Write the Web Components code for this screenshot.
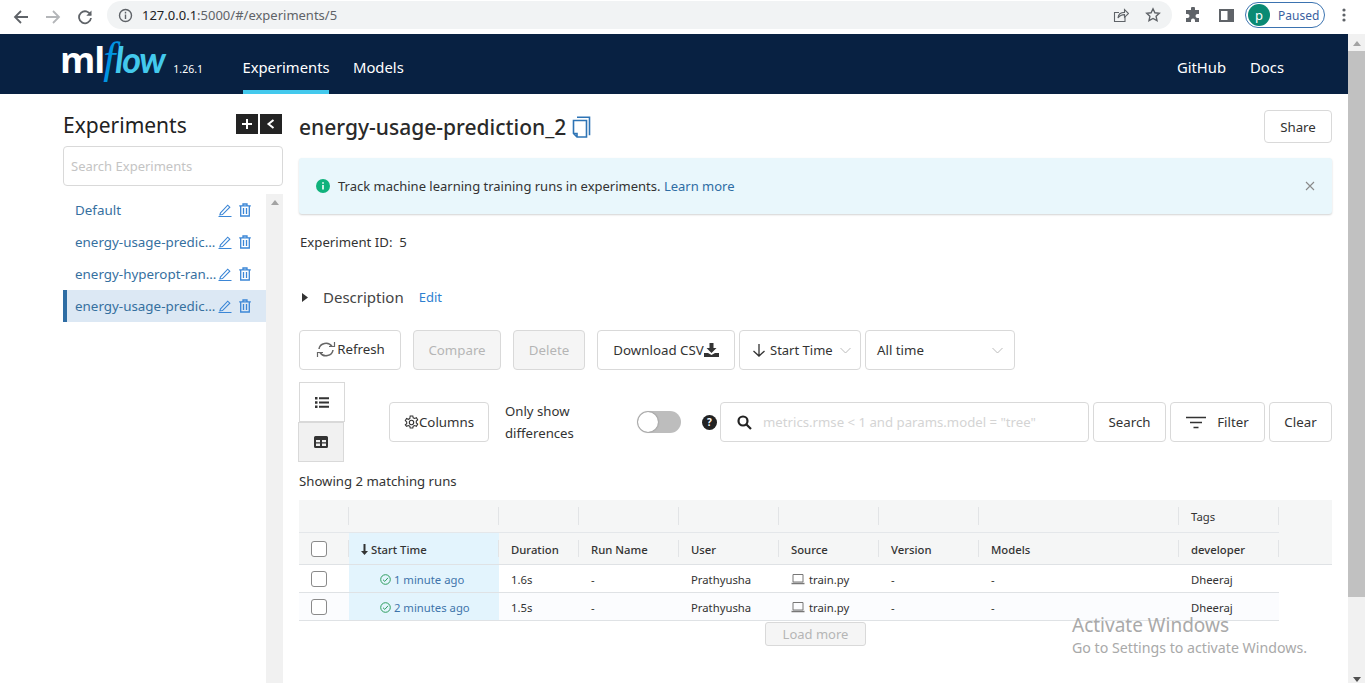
<!DOCTYPE html>
<html lang="en">
<head>
<meta charset="UTF-8">
<title>MLflow Experiments</title>
<style>
  html, body { margin: 0; height: 683px; overflow: hidden; background: #fff; }
  body { font-family: "Noto Sans", "Open Sans", sans-serif; color: #333; }
</style>
</head>
<body>
<browser-bar></browser-bar>
<page-frame>
  <app-header></app-header>
  <div style="display:flex; padding-left:63px">
    <exp-sidebar></exp-sidebar>
    <exp-main></exp-main>
  </div>
</page-frame>
<activate-note></activate-note>

<script>
// small helper, every component just sets its shadow html
class Base extends HTMLElement {
    constructor() {
        super();
        this.attachShadow({ mode: 'open' }).innerHTML = this.render();
    }
}

class BrowserBar extends Base {
    render() {
        return `
        <style>
            :host { display:flex; align-items:center; height:34px; background:#fff; color:#5f6368; font-size:13px; position:relative; }
            svg { display:block; flex:none; }
            .nav { display:flex; align-items:center; padding-left:13px; width:107px; box-sizing:border-box; height:30px; }
            .nav svg { margin-right:16px; }
            .pill { width:1065px; height:28px; margin-top:-4px; border-radius:14px; background:#f1f3f4; display:flex; align-items:center; box-sizing:border-box; padding:0 11px; flex:none; }
            .url { margin-left:9px; flex:1; white-space:nowrap; }
            .url b { font-weight:400; color:#202124; }
            .right { display:flex; align-items:center; margin-top:-4px; }
            .paused { display:flex; align-items:center; width:80px; height:26px; box-sizing:border-box; border:1px solid #3b73b0; border-radius:14px; padding-left:2px; color:#3a5fa0; font-size:12px; margin-left:11px; gap:8px; }
            .avatar { width:22px; height:22px; border-radius:50%; background:#0b8a74; color:#fff; font-size:13px; display:flex; align-items:center; justify-content:center; }
        </style>
        <div class="nav">
            <svg width="16" height="16" viewBox="0 0 16 16" fill="none" stroke="#5f6368" stroke-width="1.8"><path d="M15 8H2M8 2 2 8l6 6"/></svg>
            <svg width="16" height="16" viewBox="0 0 16 16" fill="none" stroke="#b4b6b9" stroke-width="1.8"><path d="M1 8h13M8 2l6 6-6 6"/></svg>
            <svg width="16" height="16" viewBox="0 0 16 16" fill="none" stroke="#5f6368" stroke-width="1.8"><path d="M13.6 6A6 6 0 1 0 14 9"/><path d="M14.5 1.5v5.2H9.3" fill="#5f6368" stroke="none"/></svg>
        </div>
        <div class="pill">
            <svg width="15" height="15" viewBox="0 0 15 15" fill="none" stroke="#5f6368" stroke-width="1.4"><circle cx="7.5" cy="7.5" r="6"/><path d="M7.5 6.6v4.4M7.5 3.8v1.6"/></svg>
            <span class="url"><b>127.0.0.1</b>:5000/#/experiments/5</span>
            <svg width="16" height="16" viewBox="0 0 16 16" fill="none" stroke="#5f6368" stroke-width="1.1" style="margin-right:16px"><path d="M12 9v5.5H1.5V5.5H6"/><path d="M5 11c.3-3.6 3-5.6 6.5-5.6V2.6L15.5 6.5l-4 3.8V7.6C8.6 7.6 6.6 8.6 5 11z"/></svg>
            <svg width="16" height="16" viewBox="0 0 16 16" fill="none" stroke="#5f6368" stroke-width="1.4"><path d="m8 1.8 1.9 4 4.4.5-3.2 3 .9 4.4L8 11.5l-4 2.2.9-4.4-3.2-3 4.4-.5z"/></svg>
        </div>
        <div class="right">
            <svg width="16" height="16" viewBox="0 0 16 16" fill="#5f6368" style="margin-left:13px"><path d="M6 1.5a2 2 0 0 1 4 0V3h4v4h-1.500a2 2 0 0 0 0 4H14v4h-4v-1.500a2 2 0 0 0-4 0V15H1v-4h1.500a2 2 0 0 0 0-4H1V3h5z"/></svg>
            <svg width="15" height="15" viewBox="0 0 15 15" style="margin-left:18px"><path fill="#5f6368" d="M0 1h15v13H0z"/><path fill="#fff" d="M2 3h6.500v9H2z"/></svg>
            <div class="paused"><span class="avatar">p</span><span>Paused</span></div>
            <svg width="4" height="14" viewBox="0 0 4 14" fill="#5f6368" style="margin-left:17px"><circle cx="2" cy="2" r="1.600"/><circle cx="2" cy="7" r="1.600"/><circle cx="2" cy="12" r="1.600"/></svg>
        </div>`;
    }
}

// main scrolled area with the browser scrollbar on the right
class PageFrame extends Base {
    render() {
        return `
        <style>
            :host { display:flex; height:649px; overflow:hidden; }
            .page { width:1348px; flex:none; }
            .bar { width:17px; background:#f1f1f1; display:flex; flex-direction:column; align-items:center; }
            .bar i { display:block; width:0; height:0; border:4px solid transparent; }
            .up { border-bottom:5px solid #a3a3a3 !important; border-top:0 !important; margin:7px 0 5px; }
            .thumb { width:100%; height:546px; background:#c1c1c1; flex:none; }
            .sp { flex:1; }
            .down { border-top:5px solid #505050 !important; border-bottom:0 !important; margin-bottom:1px; }
        </style>
        <div class="page"><slot></slot></div>
        <div class="bar"><i class="up"></i><div class="thumb"></div><div class="sp"></div><i class="down"></i></div>`;
    }
}

class AppHeader extends Base {
    render() {
        return `
        <style>
            :host { display:flex; align-items:stretch; height:60px; background:#082142; color:#fff; font-size:14.800px; padding-left:62px; padding-right:64px; }
            .logo { display:flex; align-items:baseline; width:181px; padding-top:5px; box-sizing:border-box; white-space:nowrap; }
            .ml { font:700 36px/40px "Open Sans", sans-serif; letter-spacing:-1px; margin-left:-2px; }
            .flow { font:italic 700 36px/40px "Lato", sans-serif; color:#43c9ed; letter-spacing:-1.500px; margin-left:-1px; }
            .flow b { font:italic 400 44px/40px "Liberation Serif", serif; color:#0194e2; margin-right:1px; }
            .ver { font-size:10.500px; margin-left:9px; }
            a { color:#fff; text-decoration:none; display:flex; align-items:center; height:60px; box-sizing:border-box; padding-top:6px; }
            .tab { width:86px; justify-content:center; border-bottom:4px solid #43c9ed; padding-top:10px; }
            .models { margin-left:24px; }
            .sp { flex:1; }
            .docs { margin-left:24px; }
        </style>
        <div class="logo"><span class="ml">ml</span><span class="flow"><b>f</b>low</span><span class="ver">1.26.1</span></div>
        <a class="tab">Experiments</a>
        <a class="models">Models</a>
        <span class="sp"></span>
        <a>GitHub</a>
        <a class="docs">Docs</a>`;
    }
}

const pencil = `<svg width="14" height="14" viewBox="0 0 14 14" fill="none" stroke="#3b86d6" stroke-width="1.100"><path d="M2.500 9.800 9.700 2.200l2.100 2-7.300 7.400-2.600.3zM.5 13.500h13"/></svg>`;
const trash = `<svg width="12" height="14" viewBox="0 0 12 14" fill="none" stroke="#3b86d6" stroke-width="1.300"><path d="M.2 2.800h11.600M1.700 2.800V13h8.600V2.800M4 2.800V1h4v1.800M4.500 5v6M7.500 5v6"/></svg>`;

class ExpRow extends Base {
    render() {
        return `
        <style>
            :host { display:flex; align-items:center; height:32px; width:203px; box-sizing:border-box; padding-left:12px; font-size:13.400px; color:#36709f; }
            :host([active]) { background:#dce8f4; border-left:4px solid #2e6da4; padding-left:8px; }
            .name { width:143px; white-space:nowrap; overflow:hidden; text-overflow:ellipsis; }
            .ic { display:flex; align-items:center; gap:7px; }
            svg { display:block; }
        </style>
        <span class="name"><slot></slot></span>
        <span class="ic">${pencil}${trash}</span>`;
    }
}

class ExpSidebar extends Base {
    render() {
        return `
        <style>
            :host { display:block; width:220px; flex:none; height:589px; box-sizing:border-box; margin-right:16px; overflow:hidden; }
            .head { display:flex; align-items:center; justify-content:space-between; padding:9px 1px 0 0; height:52px; box-sizing:border-box; }
            h1 { font-size:21px; font-weight:400; margin:0; color:#222; line-height:24px; }
            .btns { display:flex; gap:2px; margin-top:-1px; }
            .btns span { width:22px; height:20px; background:#232323; display:flex; align-items:center; justify-content:center; }
            .search { height:40px; border:1px solid #d9d9d9; border-radius:4px; box-sizing:border-box; padding:0 7px; display:flex; align-items:center; color:#c4c4c4; font-size:13px; }
            .listwrap { display:flex; margin-top:8px; height:500px; }
            .list { width:203px; flex:none; }
            .sb { width:17px; background:#f1f1f1; display:flex; justify-content:center; }
            .sb i { display:block; width:0; height:0; border:4px solid transparent; border-top:0; border-bottom:5px solid #a3a3a3; margin-top:6px; }
        </style>
        <div class="head">
            <h1>Experiments</h1>
            <div class="btns">
                <span><svg width="12" height="12" viewBox="0 0 12 12" stroke="#fff" stroke-width="2"><path d="M6 1v10M1 6h10"/></svg></span>
                <span><svg width="10" height="10" viewBox="0 0 10 10" fill="none" stroke="#fff" stroke-width="2"><path d="M7.500 1 2.500 5l5 4"/></svg></span>
            </div>
        </div>
        <div class="search">Search Experiments</div>
        <div class="listwrap">
            <div class="list">
                <exp-row>Default</exp-row>
                <exp-row>energy-usage-prediction</exp-row>
                <exp-row>energy-hyperopt-random</exp-row>
                <exp-row active>energy-usage-prediction_2</exp-row>
            </div>
            <div class="sb"><i></i></div>
        </div>`;
    }
}

class UiButton extends Base {
    render() {
        return `
        <style>
            :host { display:inline-flex; align-items:center; justify-content:center; box-sizing:border-box; height:40px; border:1px solid #d9d9d9; border-radius:4px; background:#fff; font-size:13.300px; color:#333; white-space:nowrap; flex:none; }
            :host([disabled]) { background:#f5f5f5; color:#b5b5b5; }
            ::slotted(svg) { display:block; flex:none; }
        </style>
        <slot></slot>`;
    }
}

class ExpMain extends Base {
    render() {
        return `
        <style>
            :host { display:block; width:1033px; flex:none; font-size:13.200px; color:#333; }
            svg { display:block; flex:none; }
            .title { display:flex; align-items:center; justify-content:space-between; height:64px; padding-top:2px; box-sizing:border-box; }
            h2 { display:flex; align-items:center; gap:6px; margin:0; font-size:21px; font-weight:500; color:#2a2a2a; }
            .share { width:68px; height:33px; margin-top:-1px; }
            .alert { height:56px; box-sizing:border-box; background:#e9f7fc; border-radius:3px; box-shadow:0 1px 2px rgba(0,0,0,.18); display:flex; align-items:center; padding:0 17px; }
            .alert span { margin-left:8px; flex:1; color:#333; font-size:13px; }
            a { color:#2e6da4; text-decoration:none; }
            .id { margin-top:19px; height:18px; line-height:18px; padding-left:1px; }
            .desc { display:flex; align-items:center; margin-top:34px; height:24px; padding-left:3px; }
            .desc b { font-weight:400; font-size:15px; margin-left:15px; color:#444; }
            .desc a { margin-left:15px; color:#2e7fd0; font-size:13px; }
            .row1 { display:flex; gap:4px; margin-top:21px; }
            .row2 { display:flex; margin-top:12px; height:80px; }
            .views { width:46px; flex:none; }
            .views div { height:40px; width:46px; box-sizing:border-box; border:1px solid #d9d9d9; display:flex; align-items:center; justify-content:center; }
            .views div + div { margin-left:-1px; background:#f1f1f1; }
            .tools { display:flex; align-items:center; flex:1; height:40px; margin-top:20px; }
            .only { line-height:22px; width:132px; margin-left:16px; }
            .switch { width:44px; height:22px; border-radius:11px; background:#bdbdbd; position:relative; flex:none; margin-right:21px; }
            .switch i { position:absolute; left:1px; top:1px; width:20px; height:20px; border-radius:50%; background:#fff; box-shadow:0 0 2px rgba(0,0,0,.4); }
            .q { width:15px; height:15px; border-radius:50%; background:#222; color:#fff; font-size:10px; font-weight:700; display:flex; align-items:center; justify-content:center; flex:none; margin-right:3px; }
            .query { width:369px; height:40px; box-sizing:border-box; border:1px solid #d9d9d9; border-radius:4px; display:flex; align-items:center; padding-left:16px; color:#d4d4d4; flex:none; margin-right:4px; white-space:nowrap; }
            .query span { margin-left:11px; }
            .sel { justify-content:flex-start; }
            .count { margin-top:9px; height:20px; line-height:20px; }
            .refresh { padding-bottom:2px; box-sizing:border-box; }
        </style>
        <div class="title">
            <h2>energy-usage-prediction_2
                <svg width="19" height="22" viewBox="0 0 19 22" fill="none" stroke="#2e74b5" stroke-width="1.600"><path d="M5 1.200h12.500v18M4 4.500h10.500V21H5l-3.500-3.500V4.500zM1.500 17.500H5V21"/></svg>
            </h2>
            <ui-button class="share">Share</ui-button>
        </div>
        <div class="alert">
            <svg width="14" height="14" viewBox="0 0 14 14"><circle cx="7" cy="7" r="7" fill="#10b27c"/><path d="M7 6v4.500M7 3.200v1.600" stroke="#fff" stroke-width="1.600"/></svg>
            <span>Track machine learning training runs in experiments. <a>Learn more</a></span>
            <svg width="10" height="10" viewBox="0 0 10 10" stroke="#8a8a8a" stroke-width="1.100"><path d="m1 1 8 8M9 1 1 9"/></svg>
        </div>
        <div class="id">Experiment ID:&nbsp; 5</div>
        <div class="desc">
            <svg width="6" height="9" viewBox="0 0 6 9" fill="#333"><path d="M0 0l6 4.500L0 9z"/></svg>
            <b>Description</b><a>Edit</a>
        </div>
        <div class="row1">
            <ui-button class="refresh" style="width:102px">
                <svg width="22" height="17" viewBox="0 0 22 17" fill="none" stroke="#666" stroke-width="1.500"><path d="M4 8a7 6.500 0 0 1 13-2.500M18 9a7 6.500 0 0 1-13 2.500"/><path d="M14 5.500h5.500V1M8 11.500H2.500V16" stroke-width="1.200"/></svg>Refresh</ui-button>
            <ui-button disabled style="width:88px; margin-left:8px">Compare</ui-button>
            <ui-button disabled style="width:72px; margin-left:8px">Delete</ui-button>
            <ui-button style="width:138px; margin-left:8px">Download CSV
                <svg width="15" height="14" viewBox="0 0 15 14" fill="#333"><path d="M5.500 0h4v5h3l-5 5-5-5h3zM0 10h4l3.500 2 3.500-2h4v4H0z"/></svg></ui-button>
            <ui-button class="sel" style="width:122px; padding:0 12px; font-size:13px">
                <svg width="14" height="13" viewBox="0 0 14 13" fill="none" stroke="#333" stroke-width="1.300" style="margin-right:4px"><path d="M7 0v12M1.500 7 7 12l5.500-5"/></svg>Start Time
                <svg width="11" height="7" viewBox="0 0 11 7" fill="none" stroke="#bbb" stroke-width="1" style="margin-left:7px"><path d="M.5 1 5.500 6l5-5"/></svg></ui-button>
            <ui-button class="sel" style="width:150px; padding:0 11px; justify-content:space-between">All time
                <svg width="11" height="7" viewBox="0 0 11 7" fill="none" stroke="#bbb" stroke-width="1"><path d="M.5 1 5.500 6l5-5"/></svg></ui-button>
        </div>
        <div class="row2">
            <div class="views">
                <div><svg width="14" height="11" viewBox="0 0 14 11" fill="#333"><path d="M0 0h2.500v2.500H0zM4 .3h10v2H4zM0 4.200h2.500v2.500H0zM4 4.500h10v2H4zM0 8.400h2.500v2.500H0zM4 8.700h10v2H4z"/></svg></div>
                <div><svg width="14" height="12" viewBox="0 0 14 12" fill="#333"><path d="M1.500 0h11A1.500 1.500 0 0 1 14 1.500v9a1.500 1.500 0 0 1-1.500 1.500h-11A1.500 1.500 0 0 1 0 10.500v-9A1.500 1.500 0 0 1 1.500 0zM2 4v2.200h4V4zm6 0v2.200h4V4zM2 7.600v2.400h4V7.600zm6 0v2.400h4V7.600z" fill-rule="evenodd"/></svg></div>
            </div>
            <div class="tools">
                <ui-button style="width:100px; margin-left:44px">
                    <svg width="15" height="15" viewBox="0 0 15 15" fill="none" stroke="#333" stroke-width="1.100"><circle cx="7.500" cy="7.500" r="2.200"/><path d="M6.200 1h2.600l.4 1.800 1.500.7 1.700-.8 1.300 2.200-1.400 1.200v1.800l1.400 1.200-1.300 2.200-1.700-.8-1.500.7-.4 1.800H6.200l-.4-1.800-1.500-.7-1.700.8L1.300 9.900l1.400-1.200V6.900L1.300 5.700l1.300-2.200 1.700.8 1.500-.7z"/></svg>Columns</ui-button>
                <div class="only">Only show<br>differences</div>
                <div class="switch"><i></i></div>
                <div class="q">?</div>
                <div class="query">
                    <svg width="15" height="15" viewBox="0 0 15 15" fill="none" stroke="#222" stroke-width="2.200"><circle cx="6" cy="6" r="4.500"/><path d="m9.500 9.500 4.500 4.500"/></svg>
                    <span>metrics.rmse &lt; 1 and params.model = "tree"</span>
                </div>
                <ui-button style="width:73px; margin-right:4px">Search</ui-button>
                <ui-button style="width:95px; margin-right:4px">
                    <svg width="20" height="13" viewBox="0 0 20 13" stroke="#333" stroke-width="1.700" style="margin-right:11px"><path d="M0 1.500h20M4 6.500h12M7.500 11.500h5"/></svg>Filter</ui-button>
                <ui-button style="width:63px">Clear</ui-button>
            </div>
        </div>
        <div class="count">Showing 2 matching runs</div>
        <run-table style="margin-top:9px"></run-table>`;
    }
}

class RunTable extends Base {
    render() {
        const cols = [50, 150, 80, 100, 100, 100, 100, 200, 100];
        const cell = (i, body, cls = '') => `<div class="c ${cls}" style="width:${cols[i]}px">${body}</div>`;
        const head1 = cols.map((w, i) => cell(i, i === 8 ? 'Tags' : '', i ? 'sep' : '')).join('');
        const names = ['', '<svg width="7" height="11" viewBox="0 0 7 11" fill="#333"><path d="M2.500 0h2v7H7l-3.500 4L0 7h2.500z"/></svg> Start Time', 'Duration', 'Run Name', 'User', 'Source', 'Version', 'Models', 'developer'];
        const head2 = names.map((n, i) => i === 0 ? cell(0, '<span class="cb"></span>', 'cbc') : cell(i, n, 'sep' + (i === 1 ? ' hl' : ''))).join('');
        const laptop = '<svg width="14" height="12" viewBox="0 0 14 12" fill="none" stroke="#777" stroke-width="1"><path d="M2 1.500h10v7.500H2z"/><path d="M.500 10.500h13" stroke-width="1.500"/></svg>';
        const check = '<svg width="11" height="11" viewBox="0 0 11 11" fill="none" stroke="#2f9e5f" stroke-width="1"><circle cx="5.500" cy="5.500" r="4.800"/><path d="m3 5.700 1.800 1.700L8 3.800"/></svg>';
        const row = (t, d) => [
            cell(0, '<span class="cb"></span>', 'cbc'),
            cell(1, `<a>${check}&nbsp;${t}</a>`, 'hl ctr'),
            cell(2, d), cell(3, '-'), cell(4, 'Prathyusha'),
            cell(5, `${laptop}<span style="margin-left:1px">train.py</span>`), cell(6, '-'), cell(7, '-'), cell(8, 'Dheeraj')
        ].join('');
        return `
        <style>
            :host { display:block; font-size:11.300px; color:#333; position:relative; }
            .r { display:flex; }
            .h { background:#f5f6f6; }
            .h1 { height:33px; }
            .h1 .in { display:flex; width:980px; height:33px; box-sizing:border-box; border-bottom:1px solid #e4e7ea; }
            .h1 .c, .h2 .c { padding-top:1px; }
            .h2 { height:32px; box-sizing:border-box; border-bottom:1px solid #dfe2e5; font-weight:500; }
            .c { box-sizing:border-box; display:flex; align-items:center; padding-left:12px; flex:none; position:relative; gap:3px; }
            .sep::before { content:""; position:absolute; left:-1px; top:7px; bottom:7px; width:1px; background:#e2e4e6; }
            .h1 .c:last-child::after, .h2 .c:last-child::after { content:""; position:absolute; right:0; top:7px; bottom:7px; width:1px; background:#e2e4e6; }
            .hl { background:#e3f4fd; }
            .ctr { padding-left:31px; }
            .d { height:28px; width:980px; box-sizing:border-box; border-bottom:1px solid #dfe2e5; }
            .d .c { padding-top:1px; }
            .d.alt { background:#fbfcfe; }
            .cb { width:16px; height:16px; box-sizing:border-box; border:1px solid #8a8a8a; border-radius:3px; background:#fff; display:block; }
            a { color:#3f74ab; display:flex; align-items:center; }
            svg { display:block; flex:none; }
            .more { margin:1px 0 0 466px; width:101px; height:24px; box-sizing:border-box; border:1px solid #d9d9d9; border-radius:3px; background:#f5f5f5; color:#b5b5b5; font-size:13px; display:flex; align-items:center; justify-content:center; }
        </style>
        <div class="r h h1"><div class="in">${head1}</div></div>
        <div class="r h h2">${head2}</div>
        <div class="r d">${row('1 minute ago', '1.6s')}</div>
        <div class="r d alt">${row('2 minutes ago', '1.5s')}</div>
        <div class="more">Load more</div>`;
    }
}

// windows watermark sits over the page
class ActivateNote extends Base {
    render() {
        return `
        <style>
            :host { display:block; position:absolute; left:1072px; top:613px; color:#a9a9a9; font-size:14.200px; pointer-events:none; white-space:nowrap; }
            .a { font-size:19px; line-height:25px; }
            .b { line-height:20px; }
        </style>
        <div class="a">Activate Windows</div>
        <div class="b">Go to Settings to activate Windows.</div>`;
    }
}

customElements.define('browser-bar', BrowserBar);
customElements.define('page-frame', PageFrame);
customElements.define('app-header', AppHeader);
customElements.define('exp-row', ExpRow);
customElements.define('exp-sidebar', ExpSidebar);
customElements.define('ui-button', UiButton);
customElements.define('exp-main', ExpMain);
customElements.define('run-table', RunTable);
customElements.define('activate-note', ActivateNote);
</script>
</body>
</html>
